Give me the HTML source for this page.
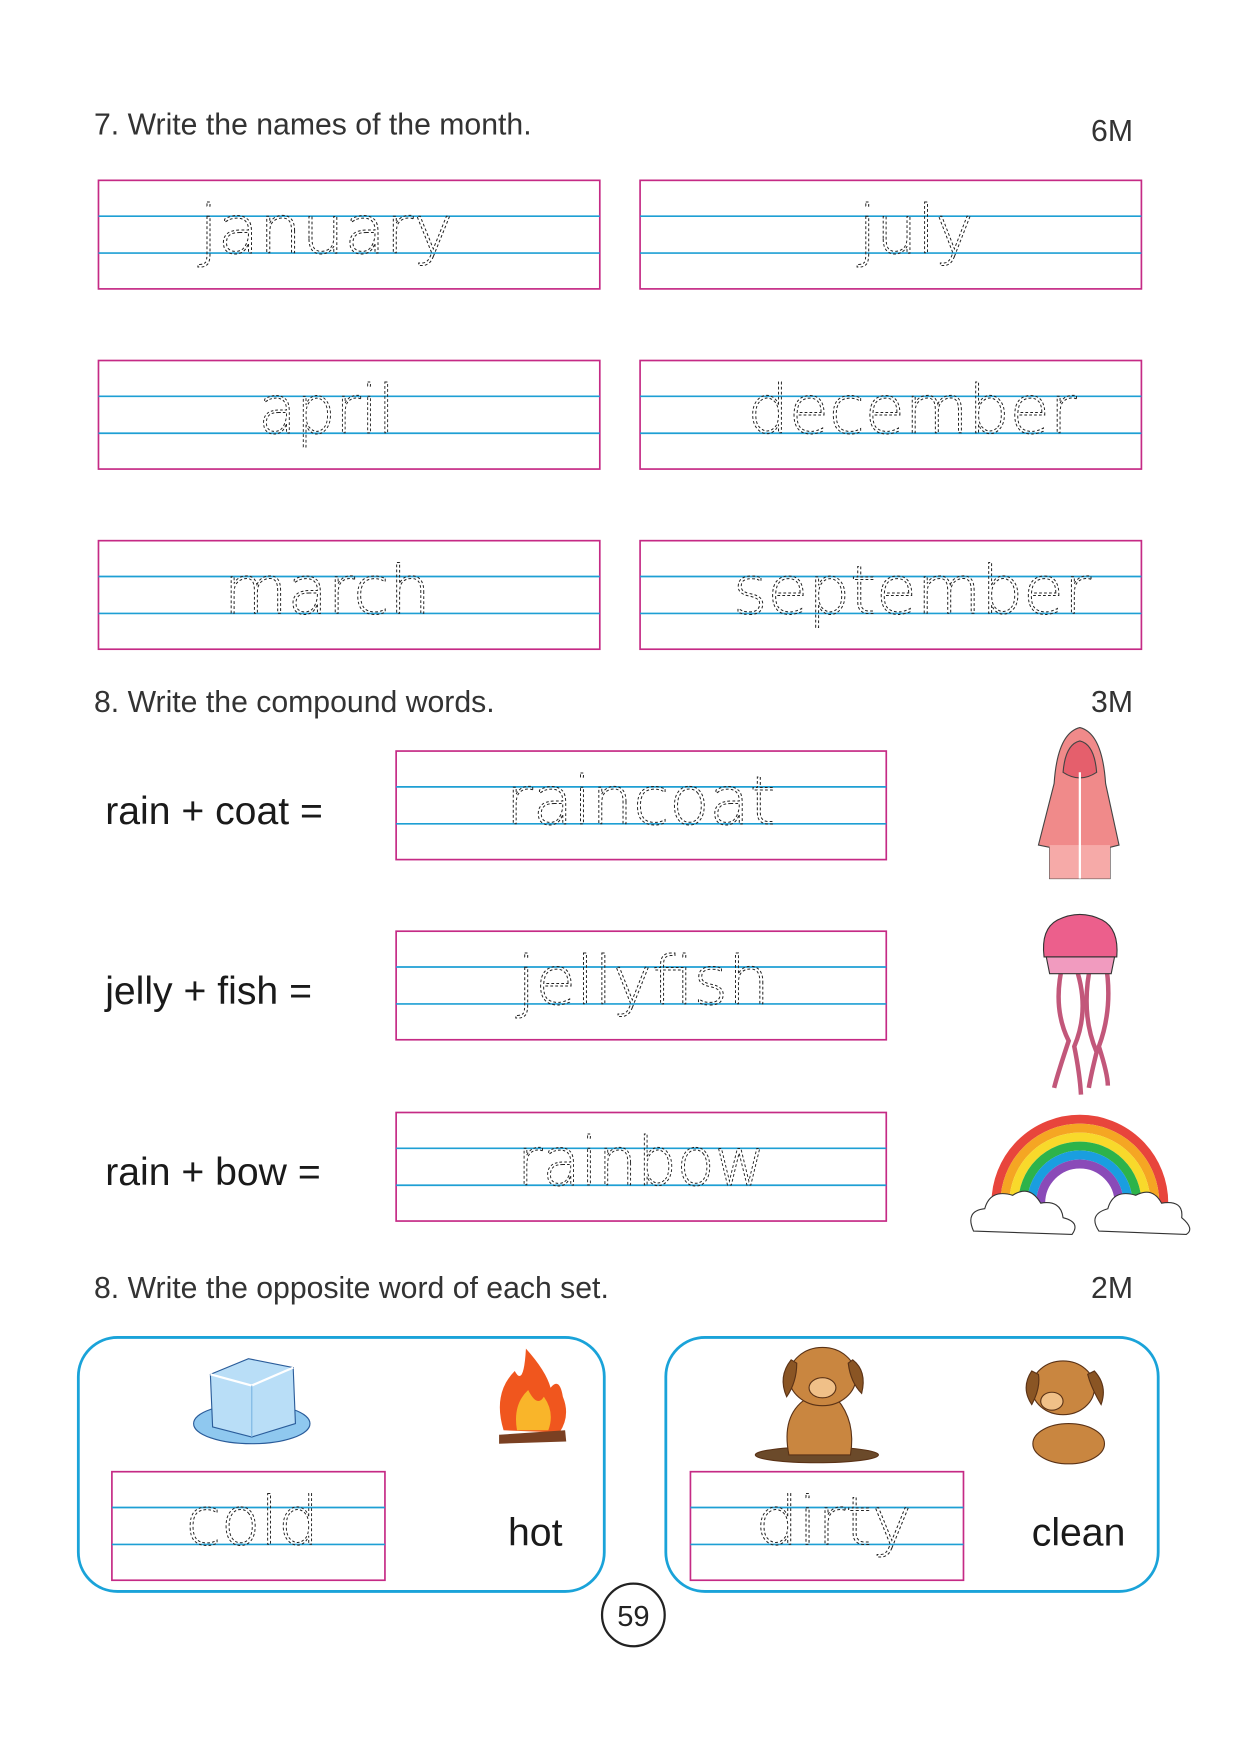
<!DOCTYPE html>
<html><head><meta charset="utf-8"><style>
html,body{margin:0;padding:0;background:#fff;width:1241px;height:1755px;overflow:hidden}
svg{display:block}
.h{font-family:"Liberation Sans",sans-serif;fill:#333;font-size:27px}
.l{font-family:"Liberation Sans",sans-serif;fill:#1a1a1a;font-size:35px}
.t{font-family:"DejaVu Sans",sans-serif;font-weight:200;font-size:60px;fill:none;stroke:#222;stroke-width:0.9;stroke-dasharray:2.5 2}
.bx{fill:none;stroke:#c52a85;stroke-width:1.5}
.bl{stroke:#1e9fd4;stroke-width:1.5}
</style></head><body>
<svg width="1241" height="1755" viewBox="0 0 1109 1568" xmlns="http://www.w3.org/2000/svg">
<defs>
<g id="box"><rect class="bx" x="0" y="0" width="448" height="97"/><line class="bl" x1="0" y1="32" x2="448" y2="32"/><line class="bl" x1="0" y1="65" x2="448" y2="65"/></g>
<g id="box2"><rect class="bx" x="0" y="0" width="438" height="97"/><line class="bl" x1="0" y1="32" x2="438" y2="32"/><line class="bl" x1="0" y1="65" x2="438" y2="65"/></g>
<g id="box3"><rect class="bx" x="0" y="0" width="244" height="97"/><line class="bl" x1="0" y1="32" x2="244" y2="32"/><line class="bl" x1="0" y1="65" x2="244" y2="65"/></g>
</defs>
<text class="h" x="84" y="120">7. Write the names of the month.</text>
<text class="h" x="975" y="126">6M</text>

<use href="#box" x="88" y="161"/><use href="#box" x="572" y="161"/>
<use href="#box" x="88" y="322"/><use href="#box" x="572" y="322"/>
<use href="#box" x="88" y="483"/><use href="#box" x="572" y="483"/>
<text class="t" x="178" y="226" textLength="227" lengthAdjust="spacingAndGlyphs">january</text>
<text class="t" x="767" y="226" textLength="103" lengthAdjust="spacingAndGlyphs">july</text>
<text class="t" x="231" y="387" textLength="122" lengthAdjust="spacingAndGlyphs">april</text>
<text class="t" x="668" y="387" textLength="294" lengthAdjust="spacingAndGlyphs">december</text>
<text class="t" x="200" y="548" textLength="185" lengthAdjust="spacingAndGlyphs">march</text>
<text class="t" x="655" y="548" textLength="320" lengthAdjust="spacingAndGlyphs">september</text>

<text class="h" x="84" y="636">8. Write the compound words.</text>
<text class="h" x="975" y="636">3M</text>
<text class="l" x="94" y="736">rain + coat =</text>
<text class="l" x="94" y="897">jelly + fish =</text>
<text class="l" x="94" y="1059">rain + bow =</text>
<use href="#box2" x="354" y="671"/><use href="#box2" x="354" y="832"/><use href="#box2" x="354" y="994"/>
<text class="t" x="452" y="736" textLength="241" lengthAdjust="spacingAndGlyphs">raincoat</text>
<text class="t" x="462" y="897" textLength="226" lengthAdjust="spacingAndGlyphs">jellyfish</text>
<text class="t" x="462" y="1059" textLength="222" lengthAdjust="spacingAndGlyphs">rainbow</text>

<!-- raincoat -->
<g stroke="#444" stroke-width="1">
<path d="M942 700 Q945 655 965 650 Q985 655 988 700 L1000 755 L992 757 L992 785 L938 785 L938 757 L928 755 Z" fill="#f08a8a"/>
<path d="M950 690 Q952 665 965 662 Q978 665 980 690 Q965 700 950 690Z" fill="#e55f6c"/>
<rect x="938" y="755" width="54" height="30" fill="#f6aaa8" stroke="none"/>
<line x1="965" y1="690" x2="965" y2="785" stroke="#fff" stroke-width="2"/>
</g>
<!-- jellyfish -->
<g stroke="#333" stroke-width="1">
<g fill="none" stroke="#c2577a" stroke-width="4">
<path d="M950 860 Q940 900 955 930 Q945 960 942 972"/><path d="M960 860 Q975 900 960 935 Q965 960 966 978"/>
<path d="M975 860 Q965 905 980 940 Q975 960 973 972"/><path d="M988 860 Q995 900 982 935 Q990 960 990 970"/>
</g>
<path d="M933 855 Q930 830 945 822 Q965 812 985 822 Q1000 830 998 855 Z" fill="#ec5f8c"/>
<path d="M935 855 L996 855 L993 870 L938 870 Z" fill="#f19bbf"/>
</g>
<!-- rainbow -->
<g fill="none" stroke-width="8">
<path d="M890 1075 A75 75 0 0 1 1040 1075" stroke="#e8453c"/>
<path d="M898 1075 A67 67 0 0 1 1032 1075" stroke="#f5a623"/>
<path d="M906 1075 A59 59 0 0 1 1024 1075" stroke="#f8d92b"/>
<path d="M914 1075 A51 51 0 0 1 1016 1075" stroke="#2db34a"/>
<path d="M922 1075 A43 43 0 0 1 1008 1075" stroke="#1a9ee0"/>
<path d="M930 1075 A35 35 0 0 1 1000 1075" stroke="#8a4ab8"/>
</g>
<g fill="#fff" stroke="#333" stroke-width="1">
<path d="M870 1100 Q862 1082 880 1080 Q885 1062 905 1068 Q920 1058 930 1075 Q948 1072 950 1088 Q966 1092 958 1103 Z"/>
<path d="M982 1100 Q972 1085 990 1080 Q995 1062 1015 1068 Q1030 1060 1038 1075 Q1058 1072 1056 1088 Q1068 1098 1060 1103 Z"/>
</g>

<text class="h" x="84" y="1160">8. Write the opposite word of each set.</text>
<text class="h" x="975" y="1160">2M</text>
<rect x="70" y="1195" width="470" height="227" rx="35" fill="none" stroke="#1aa3d9" stroke-width="2.5"/>
<rect x="595" y="1195" width="440" height="227" rx="35" fill="none" stroke="#1aa3d9" stroke-width="2.5"/>
<use href="#box3" x="100" y="1315"/><use href="#box3" x="617" y="1315"/>
<text class="t" x="166" y="1380" textLength="119" lengthAdjust="spacingAndGlyphs">cold</text>
<text class="t" x="675" y="1380" textLength="140" lengthAdjust="spacingAndGlyphs">dirty</text>
<text class="l" x="454" y="1381">hot</text>
<text class="l" x="922" y="1381">clean</text>
<!-- ice -->
<g stroke="#2a5c9a" stroke-width="1">
<ellipse cx="225" cy="1272" rx="52" ry="18" fill="#8fc8ef"/>
<path d="M188 1228 L222 1214 L262 1222 L264 1272 L225 1284 L190 1275 Z" fill="#b9def7"/>
<path d="M188 1228 L225 1238 L262 1222" fill="none" stroke="#fff" stroke-width="2"/>
<line x1="225" y1="1238" x2="225" y2="1284" stroke="#7ab6e3"/>
</g>
<!-- fire -->
<g>
<path d="M450 1278 Q440 1245 460 1225 Q468 1240 470 1205 Q488 1225 492 1240 Q500 1230 503 1248 Q510 1265 500 1280 Z" fill="#f0561e"/>
<path d="M462 1278 Q458 1255 472 1242 Q480 1258 486 1248 Q496 1262 490 1278 Z" fill="#f9b52a"/>
<path d="M446 1282 L505 1278 L506 1288 L446 1290 Z" fill="#7a4022"/>
</g>
<!-- dogs -->
<g fill="#c98640" stroke="#5a3216" stroke-width="1">
<ellipse cx="730" cy="1300" rx="55" ry="7" fill="#6b4a2a"/>
<path d="M705 1300 Q698 1265 720 1250 L748 1250 Q765 1270 760 1300 Z"/>
<ellipse cx="735" cy="1230" rx="30" ry="26"/>
<path d="M707 1215 Q695 1230 703 1248 Q712 1235 712 1218Z" fill="#8a5524"/>
<path d="M762 1215 Q775 1225 770 1245 Q760 1235 758 1218Z" fill="#8a5524"/>
<ellipse cx="735" cy="1240" rx="12" ry="9" fill="#f0c088"/>
<ellipse cx="955" cy="1290" rx="32" ry="18"/>
<ellipse cx="950" cy="1240" rx="28" ry="24"/>
<path d="M922 1225 Q912 1240 922 1255 Q930 1240 928 1228Z" fill="#8a5524"/>
<path d="M978 1225 Q990 1238 984 1255 Q975 1240 972 1228Z" fill="#8a5524"/>
<ellipse cx="940" cy="1252" rx="10" ry="8" fill="#f0c088"/>
</g>
<circle cx="566" cy="1443" r="28" fill="none" stroke="#222" stroke-width="2"/>
<text x="566" y="1453" text-anchor="middle" font-family="Liberation Sans,sans-serif" font-size="26" fill="#222">59</text>
</svg>
</body></html>
